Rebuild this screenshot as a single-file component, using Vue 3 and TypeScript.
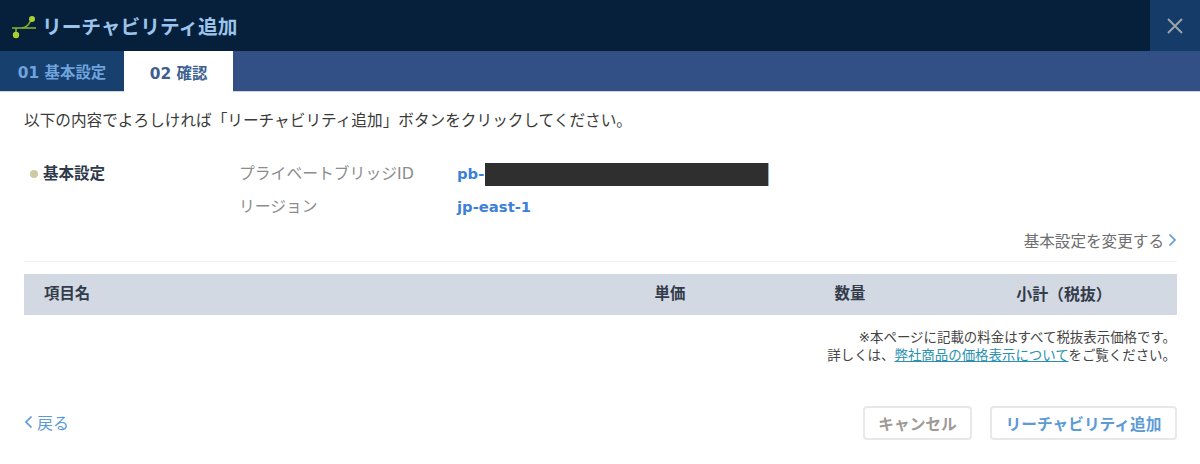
<script setup lang="ts">
interface Setting { label: string; value: string; masked?: boolean }
const settings: Setting[] = [
  { label: 'プライベートブリッジID', value: 'pb-', masked: true },
  { label: 'リージョン', value: 'jp-east-1' },
]
const columns = ['項目名', '単価', '数量', '小計（税抜）']
</script>

<template>
  <div class="dialog">
    <header class="head">
      <div class="title">
        <svg class="logo" width="26" height="26" viewBox="0 0 26 26" aria-hidden="true">
          <path d="M1 14 H25" fill="none" stroke="#84ae2e" stroke-width="1.6" />
          <path d="M21 5 L17 11 Q15 13.5 11 14 M5 21 V14" fill="none" stroke="#84ae2e" stroke-width="1.6" />
          <circle cx="21" cy="5" r="3" fill="#a8d030" />
          <circle cx="5" cy="21" r="3.2" fill="#a8d030" />
        </svg>
        <span>リーチャビリティ追加</span>
      </div>
      <button class="close" aria-label="閉じる">
        <svg width="18" height="18" viewBox="0 0 18 18"><path d="M2 2 L16 16 M16 2 L2 16" stroke="#9ba3ab" stroke-width="2" fill="none" /></svg>
      </button>
    </header>
    <nav class="tabs">
      <div class="tab done">01 基本設定</div>
      <div class="tab active">02 確認</div>
    </nav>
    <main class="body">
      <p class="lead">以下の内容でよろしければ「リーチャビリティ追加」ボタンをクリックしてください。</p>
      <section class="summary">
        <div class="heading"><i class="dot"></i>基本設定</div>
        <dl class="list">
          <div v-for="s in settings" :key="s.label" class="row">
            <dt>{{ s.label }}</dt>
            <dd>{{ s.value }}<span v-if="s.masked" class="mask"></span></dd>
          </div>
        </dl>
      </section>
      <div class="change">
        <a>基本設定を変更する</a>
        <svg width="9" height="14" viewBox="0 0 9 14"><path d="M1.5 1.5 L7 7 L1.5 12.5" fill="none" stroke="#5c9bd6" stroke-width="1.7" /></svg>
      </div>
      <div class="table-head">
        <span v-for="c in columns" :key="c">{{ c }}</span>
      </div>
      <div class="note">
        <div>※本ページに記載の料金はすべて税抜表示価格です。</div>
        <div>詳しくは、<a>弊社商品の価格表示について</a>をご覧ください。</div>
      </div>
      <footer class="foot">
        <a class="back">
          <svg width="9" height="14" viewBox="0 0 9 14"><path d="M7.5 1.5 L2 7 L7.5 12.5" fill="none" stroke="#5c9bd6" stroke-width="1.7" /></svg>
          戻る
        </a>
        <div class="actions">
          <button class="btn cancel">キャンセル</button>
          <button class="btn primary">リーチャビリティ追加</button>
        </div>
      </footer>
    </main>
  </div>
</template>

<style>
html, body { background: #fff; }
</style>

<style scoped>
.dialog {
  width: 1200px;
  height: 464px;
  display: flex;
  flex-direction: column;
  overflow: hidden;
  font-family: "DejaVu Sans", "Noto Sans CJK JP", sans-serif;
  font-size: 15.8px;
  color: #333;
  background: #fff;
}
.head {
  height: 51px;
  flex: none;
  display: flex;
  justify-content: space-between;
  background: #06203c;
}
.title {
  display: flex;
  align-items: center;
  gap: 5px;
  padding-left: 11px;
  color: #9cc3ea;
  font-size: 19.7px;
  font-weight: 700;
}
.logo { margin-top: 2px; }
.close {
  width: 50px;
  border: 0;
  padding: 0;
  display: flex;
  align-items: center;
  justify-content: center;
  background: #153c68;
}
.tabs {
  height: 40px;
  flex: none;
  display: flex;
  background: #325085;
  border-bottom: 1px solid #cfd6e2;
  box-sizing: content-box;
}
.tab {
  display: flex;
  align-items: center;
  justify-content: center;
  font-size: 15.4px;
  font-weight: 700;
}
.done { width: 124px; background: #17406f; color: #6fa3dc; }
.active { width: 109px; background: #fff; color: #3d5f8f; margin-bottom: -1px; }
.body {
  flex: 1;
  display: flex;
  flex-direction: column;
  padding: 0 23px 0 24px;
}
.lead {
  margin: 18px 0 0;
  line-height: 22px;
  font-size: 15.65px;
  color: #3a3a3a;
}
.summary {
  display: flex;
  align-items: flex-start;
  margin-top: 30px;
}
.heading {
  width: 215px;
  padding-left: 6px;
  box-sizing: border-box;
  font-weight: 700;
  line-height: 24px;
  font-size: 15.5px;
  color: #2f3a4a;
  display: flex;
  align-items: center;
  gap: 5px;
}
.dot {
  width: 8px;
  height: 8px;
  border-radius: 50%;
  background: #cdc9a0;
}
.list { margin: 0; }
.row {
  display: flex;
  height: 33px;
  line-height: 24px;
}
.row dt {
  width: 218px;
  color: #8c8c8c;
}
.row dd {
  margin: 0;
  display: flex;
  align-items: center;
  height: 24px;
  color: #3d7fd9;
  font-weight: 700;
  font-size: 14.8px;
}
.mask {
  width: 283px;
  height: 23px;
  background: #2f2f2f;
  margin-left: 1px;
  border-right: 1px solid #7fb0ea;
}
.change {
  display: flex;
  justify-content: flex-end;
  align-items: center;
  gap: 4px;
  height: 22px;
  margin-top: 1px;
  font-size: 15.6px;
  color: #6e6e6e;
}
.table-head {
  margin-top: 10px;
  border-top: 1px solid #eff2f5;
  padding-top: 12px;
  height: 41px;
  box-sizing: content-box;
  display: grid;
  grid-template-columns: 556px 180px 180px 237px;
  font-weight: 700;
  font-size: 15.4px;
  color: #333c4a;
  line-height: 41px;
  background: linear-gradient(#fff 12px, #d3d9e3 12px);
}
.table-head span { text-align: center; }
.table-head span:first-child { text-align: left; padding-left: 20px; }
.table-head span:last-child { padding-left: 11px; font-size: 15.9px; }
.note {
  margin-top: 14px;
  padding-right: 1px;
  text-align: right;
  font-size: 13.45px;
  line-height: 18px;
  color: #444;
}
.note a { color: #2a8fb0; text-decoration: underline; }
.foot {
  margin-top: 41px;
  display: flex;
  justify-content: space-between;
  align-items: center;
}
.back {
  display: flex;
  align-items: center;
  gap: 4px;
  color: #5c9bd6;
  font-size: 16px;
  margin-top: -2px;
}
.actions { display: flex; gap: 18px; }
.btn {
  height: 34px;
  box-sizing: border-box;
  border: 2px solid #e8e8e8;
  border-radius: 4px;
  background: #fff;
  padding: 0;
  font-family: inherit;
  font-size: 15.7px;
  font-weight: 700;
}
.cancel { width: 109px; color: #a09a96; }
.primary { width: 187px; color: #5c9bd6; }
</style>
